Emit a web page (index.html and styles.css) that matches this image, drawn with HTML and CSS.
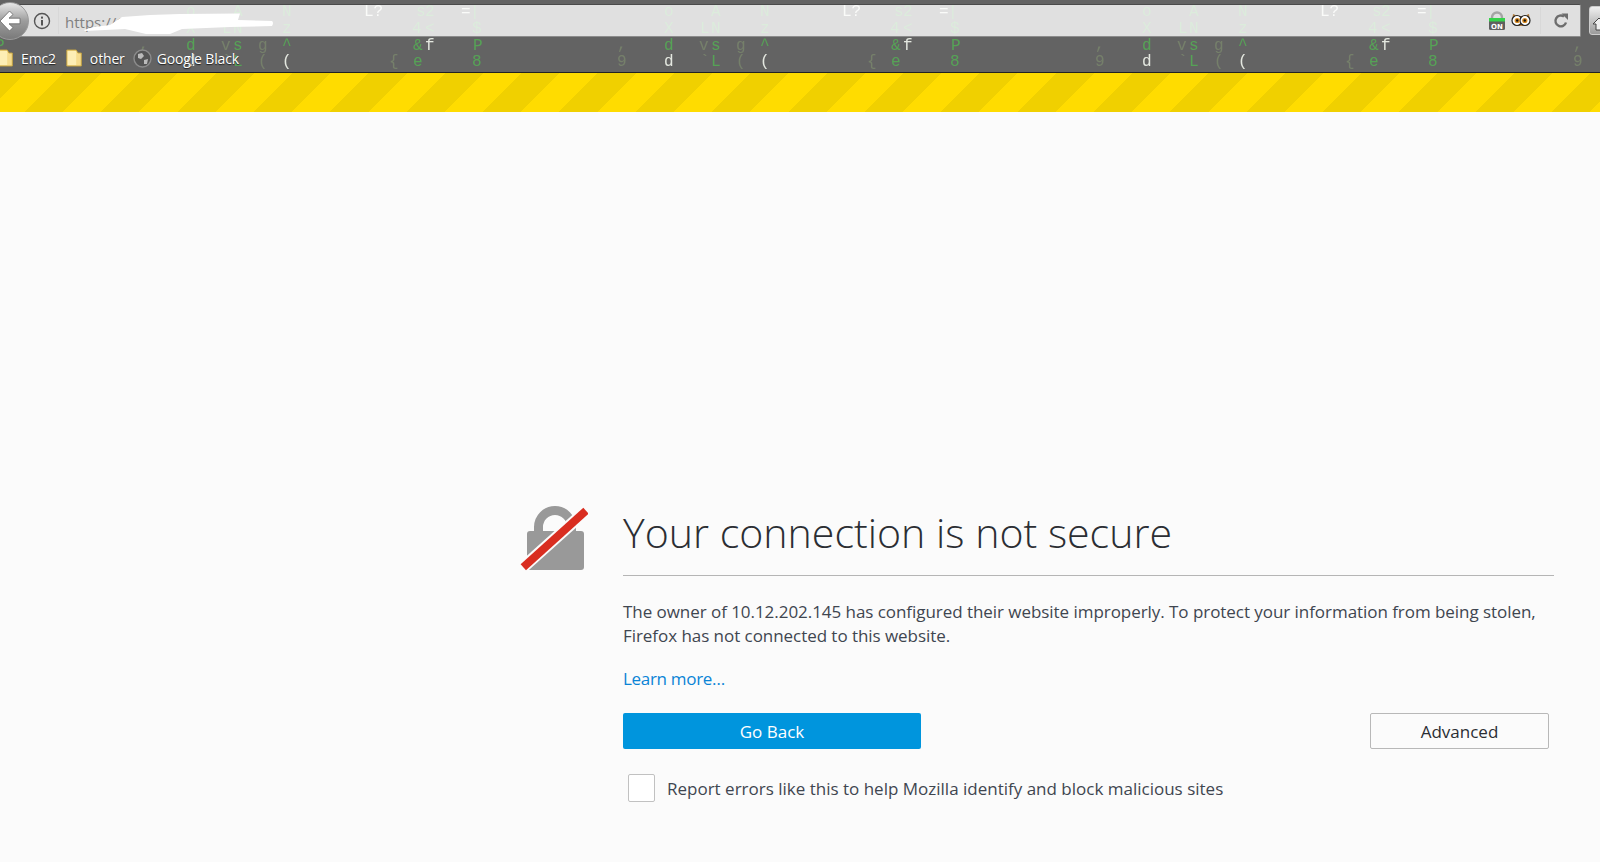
FILE: index.html
```html
<!DOCTYPE html>
<html lang="en">
<head>
    <meta charset="UTF-8">
    <meta name="viewport" content="width=device-width, initial-scale=1.0">
    <title>Insecure Connection</title>
    <link rel="stylesheet" href="styles.css">
</head>
<body>

    <div class="toolbar">
        <!-- persona background, one tile repeated -->
        <svg class="matrix" width="1600" height="74">
            <defs>
                <pattern id="tile" x="100" y="0" width="478" height="74" patternUnits="userSpaceOnUse">
                    <text class="faint" x="86" y="16">o</text>
                    <text class="faint" x="133" y="16">A</text>
                    <text class="faint" x="182" y="16">N</text>
                    <text class="light" x="264" y="16">L?</text>
                    <text class="faint" x="316" y="16">s</text>
                    <text class="faint" x="325" y="16">2</text>
                    <text class="light" x="361" y="16">=</text>
                    <text class="faint" x="370" y="16">|</text>

                    <text class="faint" x="86" y="33">X</text>
                    <text class="faint" x="122" y="33">L</text>
                    <text class="faint" x="133" y="33">N</text>
                    <text class="faint" x="182" y="33">z</text>
                    <text class="faint" x="312" y="33">4</text>
                    <text class="faint" x="325" y="33">&lt;</text>
                    <text class="faint" x="372" y="33">$</text>

                    <text class="green" x="86" y="50">d</text>
                    <text class="dim" x="121" y="50">v</text>
                    <text class="green" x="133" y="50">s</text>
                    <text class="dim" x="158" y="50">g</text>
                    <text class="green" x="182" y="50">^</text>
                    <text class="green" x="313" y="50">&amp;</text>
                    <text class="light" x="325" y="50">f</text>
                    <text class="green" x="373" y="50">P</text>

                    <text class="dim" x="39" y="49">,</text>
                    <text class="dim" x="39" y="66">9</text>
                    <text class="light" x="86" y="66">d</text>
                    <text class="dim" x="122" y="66">`</text>
                    <text class="green" x="133" y="66">L</text>
                    <text class="dim" x="158" y="66">(</text>
                    <text class="light" x="182" y="66">(</text>
                    <text class="dim" x="289" y="66">{</text>
                    <text class="green" x="313" y="66">e</text>
                    <text class="green" x="372" y="66">8</text>
                </pattern>
            </defs>
            <rect width="1600" height="74" fill="url(#tile)"></rect>
        </svg>

        <div class="urlbar">
            <svg class="info-icon" width="18" height="18" viewBox="0 0 18 18">
                <circle cx="9" cy="9" r="7.5" fill="none" stroke="#555" stroke-width="1.4"></circle>
                <rect x="8" y="8" width="2" height="5.5" fill="#555"></rect>
                <rect x="8" y="4.6" width="2" height="2" fill="#555"></rect>
            </svg>
            <span class="url-sep"></span>
            <span class="url-text">https://1</span>
            <span class="url-right">
                <svg width="18" height="20" viewBox="0 0 18 20">
                    <path d="M4 9V6.5a5 5 0 0 1 10 0V9" fill="none" stroke="#a5a5a5" stroke-width="2.4"></path>
                    <rect x="1" y="8" width="16" height="11" rx="1.5" fill="#5f5f5f"></rect>
                    <rect x="1" y="7" width="16" height="3.5" fill="#35d24a"></rect>
                    <text class="on-label" x="9" y="18">ON</text>
                </svg>
                <svg class="owl" width="20" height="14" viewBox="0 0 20 14">
                    <path d="M2 1 L7 3 H13 L18 1 L19 8 Q17 13 10 13 Q3 13 1 8Z" fill="#b07a3a"></path>
                    <circle cx="6" cy="7.5" r="5" fill="#fff" stroke="#222" stroke-width="1.2"></circle>
                    <circle cx="14" cy="7.5" r="5" fill="#fff" stroke="#222" stroke-width="1.2"></circle>
                    <circle cx="6.2" cy="7.5" r="2.6" fill="#d98a20"></circle>
                    <circle cx="13.8" cy="7.5" r="2.6" fill="#d98a20"></circle>
                    <circle cx="6.2" cy="7.5" r="1.2" fill="#111"></circle>
                    <circle cx="13.8" cy="7.5" r="1.2" fill="#111"></circle>
                </svg>
                <span class="url-sep right-sep"></span>
                <svg width="16" height="16" viewBox="0 0 16 16">
                    <path d="M13 9.5A5.4 5.4 0 1 1 11 3.6" fill="none" stroke="#6d6d6d" stroke-width="2.4"></path>
                    <path d="M8.5 0.5H15V7Z" fill="#6d6d6d"></path>
                </svg>
            </span>
        </div>

        <div class="bookmarks">
            <span class="bookmark first">
                <svg class="folder" width="17" height="18" viewBox="0 0 20 18" preserveAspectRatio="none">
                    <path d="M1 1H12L14 4H18V17H1Z" fill="#f6dc8e" stroke="#c9a640"></path>
                    <rect x="2" y="2" width="10" height="14" fill="#fdeeb5"></rect>
                </svg>
                Emc2
            </span>
            <span class="bookmark">
                <svg class="folder" width="17" height="18" viewBox="0 0 20 18" preserveAspectRatio="none">
                    <path d="M1 1H12L14 4H18V17H1Z" fill="#f6dc8e" stroke="#c9a640"></path>
                    <rect x="2" y="2" width="10" height="14" fill="#fdeeb5"></rect>
                </svg>
                other
            </span>
            <span class="bookmark globe">
                <svg width="19" height="19" viewBox="0 0 19 19">
                    <circle cx="9.5" cy="9.5" r="8.5" fill="#555" stroke="#8c8c8c" stroke-width="1.4"></circle>
                    <path d="M5 5 L9 4 L11 7 L8 10 L5 9Z M11 11 L15 10 L14 15 L11 15Z" fill="#bbb"></path>
                </svg>
                Google Black
            </span>
        </div>

        <!-- these lie over the bars -->
        <div class="back-btn">
            <svg width="22" height="22" viewBox="0 0 22 22">
                <path d="M10.5 1 L1 11 L10.5 21 L14 17.5 L10 13.8 H21 V8.2 H10 L14 4.5Z" fill="#fff" stroke="#666" stroke-width="0.8"></path>
            </svg>
        </div>
        <svg class="smear" width="200" height="30" viewBox="0 0 200 30">
            <path d="M4 20 L14 17 L30 15 L42 7 L70 5 L100 4 L160 3.5 L158 10 L192 11 Q194 13 192 16 L150 17 L102 19 L90 24 L66 24 L45 19 L5 21Z" fill="#fff"></path>
        </svg>
        <div class="next-btn">
            <svg width="12" height="14" viewBox="0 0 12 14"><path d="M7 1L1 7H4V13H10V7H13Z" fill="#eee" stroke="#444"></path></svg>
        </div>
    </div>

    <div class="stripes"></div>

    <div class="error-page">
        <div class="error-icon">
            <svg width="70" height="70" viewBox="0 0 70 70">
                <path d="M20.5 30V24a16.5 16.5 0 0 1 33 0V30" fill="none" stroke="#999" stroke-width="9"></path>
                <rect x="9" y="28" width="57" height="39" rx="3" fill="#999"></rect>
                <line x1="3" y1="66" x2="70" y2="6" stroke="#fbfbfb" stroke-width="12"></line>
                <line x1="5.3" y1="64.3" x2="68" y2="7.7" stroke="#d92d20" stroke-width="8"></line>
            </svg>
        </div>
        <div class="error-content">
            <h1 class="error-title">Your connection is not secure</h1>
            <p class="error-text">The owner of 10.12.202.145 has configured their website improperly. To protect your information from being stolen, Firefox has not connected to this website.</p>
            <a class="learn-more" href="#">Learn more…</a>
            <div class="button-row">
                <button class="btn-primary">Go Back</button>
                <button class="btn-advanced">Advanced</button>
            </div>
            <label class="report">
                <span class="checkbox"></span>
                Report errors like this to help Mozilla identify and block malicious sites
            </label>
        </div>
    </div>

</body>
</html>
```

FILE: styles.css
```css
html, body {
    height: 100%;
}

body {
    margin: 0;
    background-color: #fbfbfb;
    font-family: "Open Sans", Arial, sans-serif;
    overflow: hidden;
}

.toolbar {
    position: relative;
    height: 73px;
    padding-top: 4px;
    box-sizing: border-box;
    background-color: #636363;
    border-bottom: 1px solid #222;
    overflow: hidden;
}

.matrix {
    position: absolute;
    top: 0;
    left: 0;
    font-family: "Liberation Mono", monospace;
    font-size: 16px;
}

.matrix .green { fill: #55a355; }
.matrix .faint { fill: #4f9e4f; }
.matrix .dim { fill: #75806a; }
.matrix .light { fill: #e4e8e0; }

.urlbar {
    position: relative;
    display: flex;
    align-items: center;
    height: 33px;
    box-sizing: border-box;
    width: 1581px;
    padding-left: 33px;
    background-color: rgba(255, 255, 255, 0.8);
    border-top: 1px solid #4a4a4a;
    border-bottom: 1px solid #8c8c8c;
    border-right: 1px solid #8c8c8c;
    border-radius: 0 2px 2px 0;
}

.info-icon {
    flex: none;
}

.url-sep {
    width: 1px;
    height: 27px;
    margin-left: 7px;
    background-color: #d8d8d8;
}

.url-text {
    margin-left: 6px;
    font-size: 15px;
    color: #808080;
    position: relative;
    top: 1px;
}

.url-right {
    margin-left: auto;
    display: flex;
    align-items: center;
    gap: 5px;
    padding-right: 11px;
}

.owl {
    margin-bottom: 1px;
}

.right-sep {
    margin-left: 4px;
    margin-right: 7px;
}

.on-label {
    font-family: "DejaVu Sans", sans-serif;
    font-size: 7px;
    font-weight: 700;
    fill: #fff;
    text-anchor: middle;
}

.bookmarks {
    position: relative;
    display: flex;
    align-items: center;
    height: 36px;
    box-sizing: border-box;
    padding-top: 6px;
    gap: 10px;
    font-size: 14px;
    color: #fff;
    text-shadow: 0 1px 1px #222;
}

.bookmark {
    display: flex;
    align-items: center;
    gap: 7px;
    letter-spacing: -0.15px;
}

.bookmark.first {
    margin-left: -3px;
}

.bookmark.globe {
    margin-left: -2px;
    gap: 5px;
}

.back-btn {
    position: absolute;
    top: 2px;
    left: -9px;
    width: 38px;
    height: 38px;
    display: flex;
    align-items: center;
    justify-content: center;
    box-sizing: border-box;
    border-radius: 50%;
    border: 1px solid #9a9a9a;
    background: linear-gradient(#e8e8e8, #9c9c9c 50%, #7a7a7a);
}

.smear {
    position: absolute;
    top: 10px;
    left: 80px;
}

.next-btn {
    position: absolute;
    top: 6px;
    left: 1589px;
    width: 24px;
    height: 29px;
    box-sizing: border-box;
    padding: 7px 0 0 2px;
    border: 1px solid #ccc;
    border-radius: 3px;
    background: linear-gradient(#f0f0f0, #9a9a9a);
}

.stripes {
    height: 39px;
    background: repeating-linear-gradient(135deg, #f0d000 0, #f0d000 17.8px, #ffdc00 17.8px, #ffdc00 44.8px, #f0d000 44.8px, #f0d000 54px);
}

.error-page {
    display: flex;
    padding: 391px 0 0 518px;
}

.error-icon {
    flex: none;
    width: 105px;
}

.error-content {
    width: 931px;
    color: #3f4650;
}

.error-title {
    margin: 0;
    padding-bottom: 14px;
    font-size: 41.1px;
    font-weight: 300;
    line-height: 58px;
    color: #2b2e33;
    border-bottom: 1px solid #b5b5b5;
}

.error-text {
    margin: 24px 0 0;
    font-size: 17px;
    line-height: 24px;
    letter-spacing: -0.05px;
}

.learn-more {
    display: block;
    margin-top: 19px;
    font-size: 17px;
    line-height: 24px;
    letter-spacing: -0.3px;
    color: #0a84d6;
    text-decoration: none;
}

.button-row {
    display: flex;
    justify-content: space-between;
    margin-top: 22px;
    padding-right: 5px;
}

.button-row button {
    height: 36px;
    font-family: inherit;
    font-size: 17px;
    border-radius: 2px;
    cursor: pointer;
}

.btn-primary {
    width: 298px;
    color: #fff;
    background-color: #0095dd;
    border: none;
}

.btn-advanced {
    width: 179px;
    color: #2b2e33;
    background-color: #fbfbfb;
    border: 1px solid #b8b8b8;
}

.report {
    display: flex;
    align-items: center;
    gap: 12px;
    margin: 25px 0 0 5px;
    font-size: 17px;
    color: #3f4650;
}

.checkbox {
    flex: none;
    width: 27px;
    height: 28px;
    box-sizing: border-box;
    background-color: #fff;
    border: 1px solid #c1c1c1;
    border-radius: 2px;
}
```
